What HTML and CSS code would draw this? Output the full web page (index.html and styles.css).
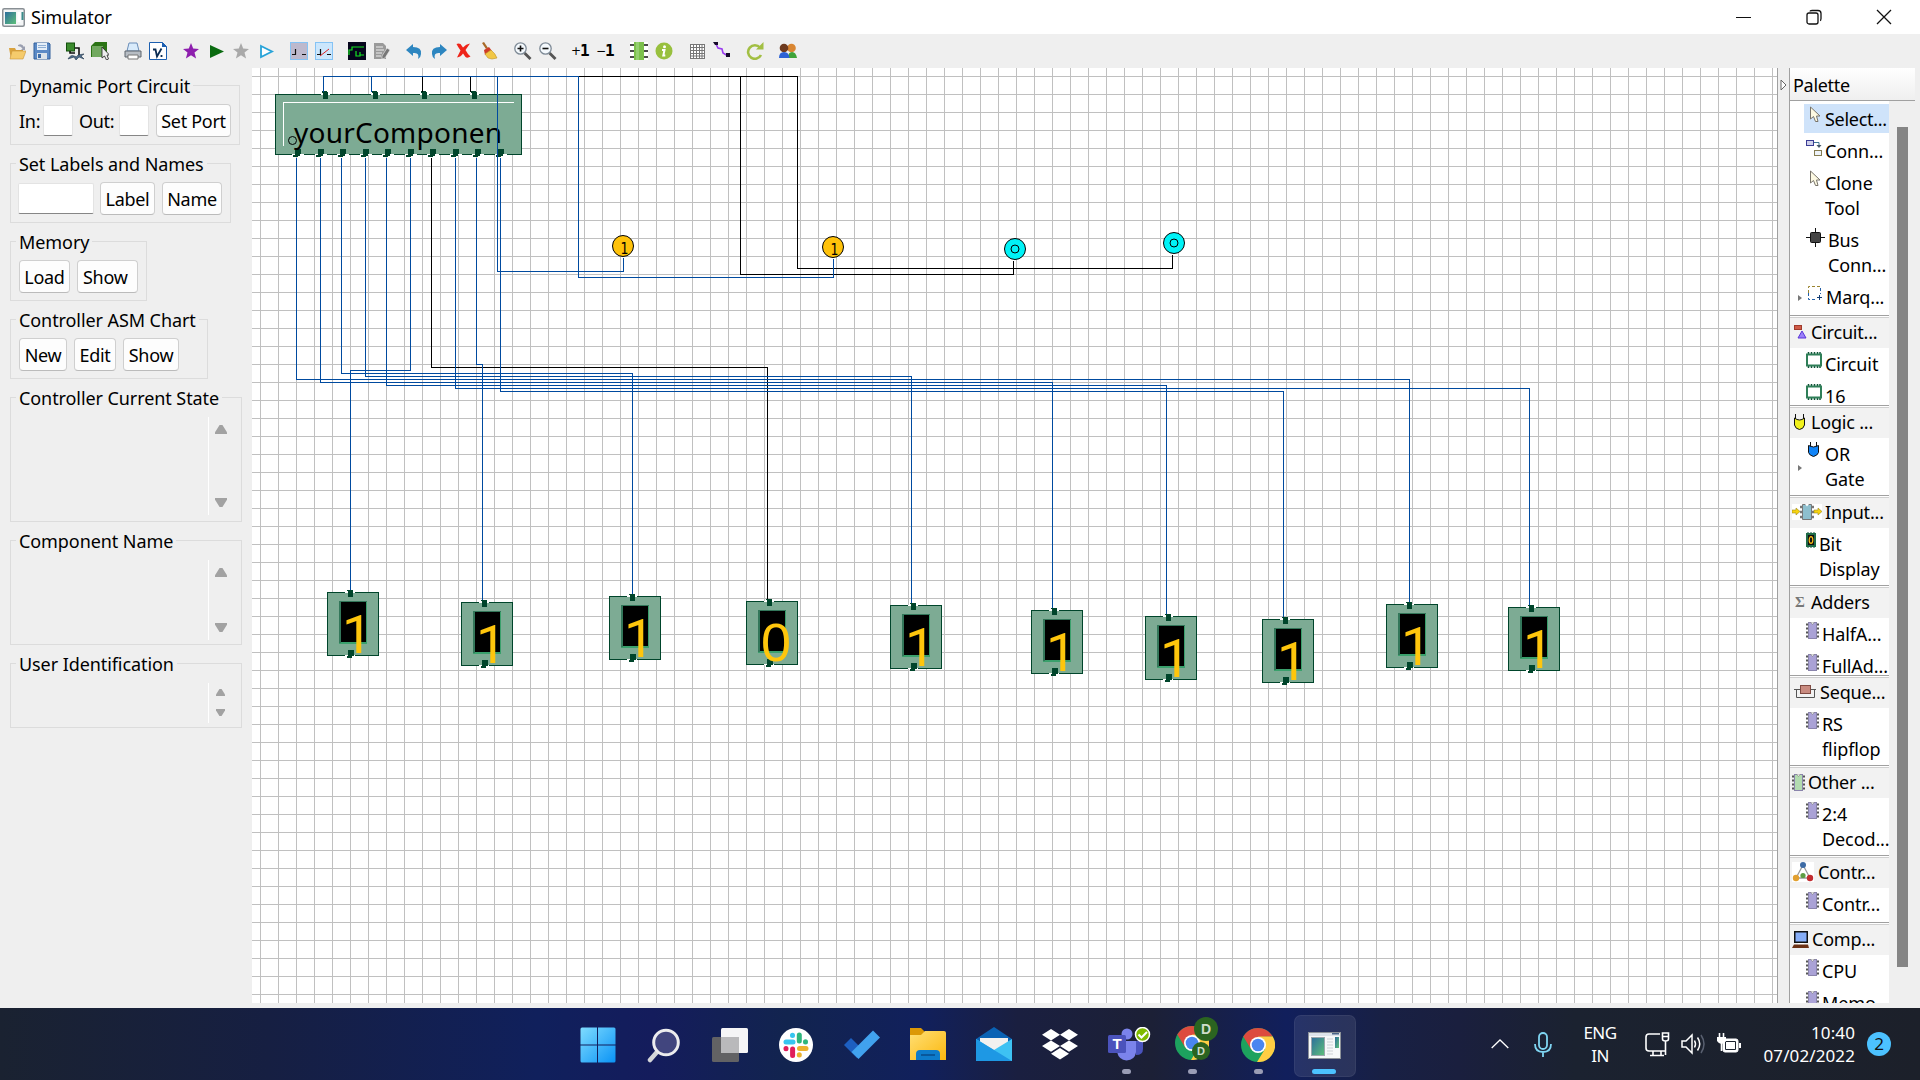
FILE: index.html
```html
<!DOCTYPE html>
<html lang="en">
<head>
<meta charset="utf-8">
<title>Simulator</title>
<link rel="stylesheet" href="styles.css">
</head>
<body>
<svg class="defs" aria-hidden="true">
  <defs>
    <linearGradient id="gWin" x1="0" y1="0" x2="1" y2="1"><stop offset="0" stop-color="#7fdcff"/><stop offset="1" stop-color="#0a93f5"/></linearGradient>
    <linearGradient id="gPic" x1="0" y1="0" x2="1" y2="1"><stop offset="0" stop-color="#2c6d9c"/><stop offset="1" stop-color="#5fc07a"/></linearGradient>
    <linearGradient id="gFold" x1="0" y1="0" x2="1" y2="1"><stop offset="0" stop-color="#ffdf75"/><stop offset="1" stop-color="#fbb80f"/></linearGradient>
    <symbol id="app" viewBox="0 0 33 27">
      <rect x=".5" y=".5" width="32" height="26" fill="#f6f8f9" stroke="#8d9299"/>
      <rect x="1" y="1" width="31" height="3" fill="#dde3ea"/>
      <rect x="24" y="1" width="7" height="1.500" fill="#4a6488"/>
      <rect x="3.500" y="5.500" width="13" height="18" fill="url(#gPic)" stroke="#9aa6ad"/>
      <path d="M19 7h6M19 10h6M19 13h6M19 16h6M19 19h6M19 22h6" stroke="#cdd1d6"/>
      <rect x="27" y="5" width="4" height="11" fill="url(#gPic)"/>
    </symbol>
    <symbol id="chip" viewBox="0 0 13 17">
      <path d="M0 2.500h13M0 6.500h13M0 10.500h13M0 14.500h13" stroke="#555" stroke-width="2"/>
      <rect x="2.500" y=".5" width="8" height="16" fill="currentColor" stroke="#8a84ac"/>
      <path d="M4.500 0h4l-2 2.500z" fill="#fff" stroke="#777" stroke-width=".6"/>
    </symbol>
    <symbol id="board" viewBox="0 0 16 16">
      <path d="M2.500 0v16M5.500 0v16M8.500 0v16M11.500 0v16M14 0v16" stroke="#0d5034" stroke-width="1.500"/>
      <rect x="1" y="2.500" width="14" height="11" fill="#fff" stroke="#2f7f58" stroke-width="2"/>
    </symbol>
    <symbol id="cursor" viewBox="0 0 12 17">
      <path d="M1.500 1v12l3-2.500 2 5h2.500l-1.500-5.500h3.500z" fill="#fdf9e2" stroke="#77736a"/>
    </symbol>
    <symbol id="star" viewBox="0 0 18 18">
      <path d="M9 1l2.200 5.600 5.800.3-4.500 3.700 1.600 6L9 13.200l-5.100 3.400 1.600-6L1 6.900l5.800-.3z" fill="currentColor"/>
    </symbol>
    <symbol id="bit" viewBox="0 0 55 68">
      <g shape-rendering="crispEdges">
        <rect x=".5" y="2.500" width="51" height="63" fill="#7dab94" stroke="#00452b"/>
        <rect x="18" y="2" width="10" height="1" fill="#fff"/><rect x="18" y="65" width="10" height="1" fill="#fff"/>
        <path d="M20 0h6v7h-5v-6h-1zM21 60h6v6h-2v2h-5v-2h1z" fill="#00452b"/>
        <rect x="12" y="11" width="28" height="43" fill="#3aa06c"/>
        <path d="M12 11h28v1h-26v41h-2z" fill="#33775a"/>
        <rect x="14" y="12" width="25" height="40" fill="#000"/>
      </g>
    </symbol>
    <symbol id="topport" viewBox="0 0 9 9"><path d="M0 3h9v1h-9z" fill="#fff"/><path d="M1 0h5v1h1v7h-5v-6h-1z" fill="#00452b"/></symbol>
    <symbol id="botport" viewBox="0 0 12 9"><path d="M0 5h12v1h-12z" fill="#fff"/><path d="M3 0h6v5h-1v2h-2v1h-5v-2h2z" fill="#00452b"/></symbol>
    <symbol id="chrome" viewBox="0 0 34 34">
      <circle cx="17" cy="17" r="17" fill="#1da25e"/>
      <path d="M2.300 8.500A17 17 0 0 1 31.700 8.500L17 9 10.500 22z" fill="#dd4b3e"/>
      <path d="M31.700 8.500A17 17 0 0 1 16 34l8-13-7-12.500z" fill="#ffce43"/>
      <circle cx="17" cy="17" r="8" fill="#fff"/><circle cx="17" cy="17" r="6.300" fill="#4a86f0"/>
    </symbol>
    <pattern id="grid" x="260" y="76" width="18" height="18" patternUnits="userSpaceOnUse">
      <path d="M0 0h18v1h-17v17h-1z" fill="#c0c0c0"/>
    </pattern>
  </defs>
</svg>

<header class="titlebar">
  <svg class="app-icon" width="23" height="19" viewBox="0 0 23 19"><rect x=".75" y=".75" width="21.500" height="17.500" rx="1.500" fill="#f3f5f6" stroke="#898f94" stroke-width="1.500"/><rect x="3" y="4" width="11" height="12" fill="url(#gPic)"/><rect x="15.500" y="4" width="3" height="10" fill="#fff"/><rect x="19.500" y="4" width="2" height="8" fill="#3b8b8a"/></svg>
  <h1 class="title">Simulator</h1>
  <div class="window-buttons">
    <svg width="16" height="16"><path d="M0 8.500h15" stroke="#111"/></svg>
    <svg width="16" height="16" fill="none" stroke="#111" stroke-width="1.300"><rect x="1" y="4" width="11" height="11" rx="2"/><path d="M4 2.500q0-1 2-1h6q3 0 3 3v5q0 2-1 2"/></svg>
    <svg width="16" height="16"><path d="M1 1l14 14M15 1L1 15" stroke="#111" stroke-width="1.300"/></svg>
  </div>
</header>

<nav class="toolbar">
  <div class="tools">
    <svg viewBox="0 0 18 18"><path d="M1 6h6l1 2h7v9H3z" fill="#d9a23c"/><path d="M10 3q4-2 6 2l1-1v4h-4l1.500-1.500Q13 4 10 4z" fill="#9a9fb0"/><path d="M4 9h14l-3 8H2z" fill="#f5cb6c" stroke="#c99435" stroke-width=".6"/></svg>
    <svg viewBox="0 0 18 18"><path d="M1 1h15l1 1v15H1z" fill="#5b8ac6" stroke="#33609c"/><rect x="4" y="1" width="10" height="7" fill="#e4eef8"/><path d="M5 3.500h8M5 5.500h8" stroke="#8eaed4"/><rect x="4" y="11" width="10" height="6" fill="#dbe3ea"/><rect x="5" y="12" width="3" height="4" fill="#3e6ca8"/></svg>
  </div>
  <div class="tools">
    <svg viewBox="0 0 18 18"><rect x=".5" y="1" width="8" height="8" fill="#3c8b2e" stroke="#13500d"/><path d="M4 9v2h5M9 6h4v8" fill="none" stroke="#111" stroke-width="1.600"/><path d="M2 17q3-5 6-3t4-1l6-1-3 2 3 3-5-2-3 3-2-3z" fill="#4c6b8a" stroke="#1e3449" stroke-width=".6"/></svg>
    <svg viewBox="0 0 18 18"><path d="M0 4l4-4h12v12l-3 3H0z" fill="#2c7415"/><rect x="1" y="4" width="11" height="11" fill="#72a960"/><path d="M11 5v11l2.500-2 2 4 2-1-1.500-4h2.500z" fill="#eee" stroke="#222" stroke-width=".8"/></svg>
  </div>
  <div class="tools">
    <svg viewBox="0 0 18 18"><path d="M5 1h8l2 8H3z" fill="#d9ebfb" stroke="#6a8db8"/><path d="M1 9h16v6H1z" fill="#b7bdc4" stroke="#5d646c"/><path d="M4 13h10v4H4z" fill="#fff" stroke="#777"/></svg>
    <svg viewBox="0 0 18 18"><path d="M.5.500h13l4 4v13H.5z" fill="#fff" stroke="#1c5fb0"/><path d="M13 0l5 5h-5z" fill="#1c5fb0"/><path d="M4 7.500h2.500l1.500 7 4.500-8M12.500 13v2" fill="none" stroke="#0b2c52" stroke-width="1.800"/></svg>
  </div>
  <div class="tools">
    <svg class="purple"><use href="#star"/></svg>
    <svg viewBox="0 0 18 18"><path d="M3 3l14 6.500-14 6.500z" fill="#0a6b10"/></svg>
    <svg class="grey"><use href="#star"/></svg>
    <svg viewBox="0 0 18 18"><path d="M4 4l11 5.500-11 5.500z" fill="#fff" stroke="#27a3d8" stroke-width="1.800"/></svg>
  </div>
  <div class="tools">
    <svg viewBox="0 0 18 18"><rect x=".5" y=".5" width="17" height="17" fill="#bdb9cd" stroke="#85c3f5"/><path d="M2 12.500h3.500V7M12 12.500h4" fill="none" stroke="#111" stroke-width="1.200"/></svg>
    <svg viewBox="0 0 18 18"><rect x=".5" y=".5" width="17" height="17" fill="#cbe6fc" stroke="#85c3f5"/><path d="M2 12.500h3.500V7M12 12.500h4" fill="none" stroke="#111" stroke-width="1.200"/><path d="M5 14l9-7" stroke="#e02222"/></svg>
  </div>
  <div class="tools">
    <svg viewBox="0 0 18 18"><rect width="18" height="18" fill="#05051c"/><path d="M1 13V8h3V5h12M8 9v5h4v-4M12 13h4" fill="none" stroke="#15e321" stroke-width="1.200"/></svg>
    <svg viewBox="0 0 18 18"><path d="M1 1h9l3 3v13H1z" fill="#9a9a9a"/><path d="M3 5h7M3 8h8M3 11h6M3 14h5" stroke="#eee"/><path d="M9 14l5-8 3 2-5 8-3 1z" fill="#777" stroke="#eee" stroke-width=".6"/></svg>
  </div>
  <div class="tools shift">
    <svg viewBox="0 0 18 18"><path d="M1 8l7-6v3q9 0 8 7 0 3-3 5 2-7-5-6v3z" fill="#2d86c0"/></svg>
    <svg viewBox="0 0 18 18"><path d="M17 8l-7-6v3q-9 0-8 7 0 3 3 5-2-7 5-6v3z" fill="#2d86c0"/></svg>
    <svg viewBox="0 0 18 18"><path d="M1.500 2q2-1 4 0L8 5.500Q11 2 15 1.500L10.500 8q2 4 5 6.500-3 2-5 .5L8 11.500Q6 15 2 15.500L5.500 8.500Q3 5 1.500 2z" fill="#ee2419"/></svg>
    <svg viewBox="0 0 18 18"><path d="M2 1l2-1 4 6-2 1z" fill="#a86a28"/><path d="M4 8l5-3 3 4-7 4z" fill="#cf3b28"/><path d="M5 12l6-4q4 3 6 8l-5 1-4-1z" fill="#f1c746" stroke="#bf9226" stroke-width=".6"/></svg>
  </div>
  <div class="tools">
    <svg viewBox="0 0 18 18"><path d="M10.500 11l6 6" stroke="#555" stroke-width="2.800"/><circle cx="6.500" cy="6.500" r="5.700" fill="#f4f9fd" stroke="#7e8a96" stroke-width="1.300"/><path d="M3.500 6.500h6M6.500 3.500v6" stroke="#111" stroke-width="1.600"/></svg>
    <svg viewBox="0 0 18 18"><path d="M10.500 11l6 6" stroke="#555" stroke-width="2.800"/><circle cx="6.500" cy="6.500" r="5.700" fill="#f4f9fd" stroke="#7e8a96" stroke-width="1.300"/><path d="M3.500 6.500h6" stroke="#111" stroke-width="1.600"/></svg>
  </div>
  <div class="tools shift">
    <span class="step">+<b>1</b></span>
    <span class="step">−<b>1</b></span>
  </div>
  <div class="tools">
    <svg viewBox="0 0 18 18"><rect width="18" height="18" fill="#fff"/><path d="M0 3h18M0 9h18M0 15h18" stroke="#111" stroke-width="1.500"/><rect x="4" width="10" height="18" fill="#7cc04c"/><rect x="6" width="3" height="18" fill="#95cf70"/></svg>
    <svg viewBox="0 0 18 18"><circle cx="9" cy="9" r="8.500" fill="#98c03e"/><circle cx="9.500" cy="4.800" r="1.500" fill="#fff"/><path d="M7 8h2.500l-1.200 5.500h2" fill="none" stroke="#fff" stroke-width="2"/></svg>
  </div>
  <div class="tools">
    <svg viewBox="0 0 18 18" fill="none" stroke="#777"><rect x="2.500" y="2.500" width="14" height="14" fill="#fff"/><path d="M5.500 2v15M8.500 2v15M11.500 2v15M14 2v15M2 5.500h15M2 8.500h15M2 11.500h15M2 14h15"/></svg>
    <svg viewBox="0 0 18 18"><path d="M3 2l2 4 4 1 1 4 5 3" fill="none" stroke="#9a3cf0" stroke-width="1.600"/><path d="M0 0h5v3H2zM13 11h4v4h-4z" fill="#160a2a"/></svg>
  </div>
  <div class="tools">
    <svg viewBox="0 0 18 18"><path d="M14 5.500A6.800 6.800 0 1 0 15 13" fill="none" stroke="#a2bf43" stroke-width="2.600"/><path d="M17.500 0v7.500H10z" fill="#a2bf43"/></svg>
  </div>
  <div class="tools">
    <svg viewBox="0 0 18 18"><circle cx="12.500" cy="6" r="4.300" fill="#d98632"/><path d="M9 16q0-6 4-6t5 6z" fill="#3fa33a"/><circle cx="5" cy="6" r="4.300" fill="#6e3a1e"/><path d="M0 16q0-6 5-6t5.500 6z" fill="#2d62d6"/></svg>
  </div>
</nav>

<main class="workspace">
  <aside class="sidebar">
    <section class="group w230">
      <h2>Dynamic Port Circuit</h2>
      <div class="row"><label>In:</label><i class="field in"></i><label class="out">Out:</label><i class="field in"></i><button class="b-port">Set Port</button></div>
    </section>
    <section class="group w221">
      <h2>Set Labels and Names</h2>
      <div class="row"><i class="field wide"></i><button class="b-label">Label</button><button class="b-name">Name</button></div>
    </section>
    <section class="group w137">
      <h2>Memory</h2>
      <div class="row"><button class="b-load">Load</button><button class="b-mshow">Show</button></div>
    </section>
    <section class="group w198">
      <h2>Controller ASM Chart</h2>
      <div class="row"><button class="b-new">New</button><button class="b-edit">Edit</button><button class="b-cshow">Show</button></div>
    </section>
    <section class="group w232 state">
      <h2>Controller Current State</h2>
      <div class="scroll"><i class="up"></i><i class="down"></i></div>
    </section>
    <section class="group w232 comp">
      <h2>Component Name</h2>
      <div class="scroll"><i class="up"></i><i class="down"></i></div>
    </section>
    <section class="group w232 user">
      <h2>User Identification</h2>
      <div class="scroll small"><i class="up"></i><i class="down"></i></div>
    </section>
  </aside>

  <svg class="canvas" width="1525" height="935" viewBox="252 68 1525 935">
    <rect x="252" y="68" width="1525" height="935" fill="#fff"/>
    <rect x="252" y="68" width="1525" height="935" fill="url(#grid)" shape-rendering="crispEdges"/>
    <g shape-rendering="crispEdges">
      <rect x="275.500" y="94.500" width="246" height="60" fill="#7dab94" stroke="#00452b"/>
      <path d="M283.500 146v-43.500h230" fill="none" stroke="#fff"/>
      <use href="#topport" x="321" y="91" width="9" height="9"/>
      <use href="#topport" x="371" y="91" width="9" height="9"/>
      <use href="#topport" x="420" y="91" width="9" height="9"/>
      <use href="#topport" x="470" y="91" width="9" height="9"/>
      <use href="#botport" x="292" y="149" width="12" height="9"/>
      <use href="#botport" x="315" y="149" width="12" height="9"/>
      <use href="#botport" x="337" y="149" width="12" height="9"/>
      <use href="#botport" x="360" y="149" width="12" height="9"/>
      <use href="#botport" x="382" y="149" width="12" height="9"/>
      <use href="#botport" x="405" y="149" width="12" height="9"/>
      <use href="#botport" x="427" y="149" width="12" height="9"/>
      <use href="#botport" x="450" y="149" width="12" height="9"/>
      <use href="#botport" x="472" y="149" width="12" height="9"/>
      <use href="#botport" x="495" y="149" width="12" height="9"/>
    </g>
    <circle cx="292.500" cy="140.500" r="4" fill="none" stroke="#000"/>
    <text class="comp-name" x="294" y="143" textLength="208">yourComponen</text>

    <g transform="translate(.5 .5)" fill="none" shape-rendering="crispEdges">
      <g stroke="#000">
        <path d="M422 91V76H797V268H1172V254"/>
        <path d="M470 91V76H740V274H1013V260"/>
        <path d="M431 157V367H767V600"/>
      </g>
      <g stroke="#004a9f">
        <path d="M323 91V76H497V271H623V257"/>
        <path d="M371 91V76H578V277H833V258"/>
        <path d="M296 157V379H1409V603"/>
        <path d="M320 157V382H1052V609"/>
        <path d="M341 157V373H632V595"/>
        <path d="M365 157V376H911V604"/>
        <path d="M386 157V385H1166V615"/>
        <path d="M410 157V370H350V591"/>
        <path d="M455 157V388H1529V606"/>
        <path d="M476 157V364H482V601"/>
        <path d="M500 157V391H1283V618"/>
      </g>
    </g>

    <g stroke="#000">
      <circle cx="623" cy="246" r="10.500" fill="#ffc20a"/><circle cx="833" cy="247" r="10.500" fill="#ffc20a"/>
      <circle cx="1015" cy="249" r="10.500" fill="#00f3f7"/><circle cx="1174" cy="243" r="10.500" fill="#00f3f7"/>
      <circle cx="1015" cy="249" r="4" fill="none"/><circle cx="1174" cy="243" r="4" fill="none"/>
    </g>
    <text class="pin" x="620.500" y="253.500" textLength="8" lengthAdjust="spacingAndGlyphs">1</text>
    <text class="pin" x="830.500" y="254.500" textLength="8" lengthAdjust="spacingAndGlyphs">1</text>

    <use href="#bit" x="327" y="590" width="55" height="68"/><text class="digit" x="342" y="653">1</text>
    <use href="#bit" x="461" y="600" width="55" height="68"/><text class="digit" x="476" y="663">1</text>
    <use href="#bit" x="609" y="594" width="55" height="68"/><text class="digit" x="624" y="657">1</text>
    <use href="#bit" x="746" y="599" width="55" height="68"/><text class="digit zero" x="761" y="661">0</text>
    <use href="#bit" x="890" y="603" width="55" height="68"/><text class="digit" x="905" y="666">1</text>
    <use href="#bit" x="1031" y="608" width="55" height="68"/><text class="digit" x="1046" y="671">1</text>
    <use href="#bit" x="1145" y="614" width="55" height="68"/><text class="digit" x="1160" y="677">1</text>
    <use href="#bit" x="1262" y="617" width="55" height="68"/><text class="digit" x="1277" y="680">1</text>
    <use href="#bit" x="1386" y="602" width="55" height="68"/><text class="digit" x="1401" y="665">1</text>
    <use href="#bit" x="1508" y="605" width="55" height="68"/><text class="digit" x="1523" y="668">1</text>
  </svg>

  <aside class="palette">
    <div class="flyout"><svg width="7" height="12"><path d="M1 1l5 5-5 5z" fill="#fff" stroke="#666"/></svg></div>
    <div class="palette-body">
      <h2 class="palette-title">Palette</h2>
      <div class="palette-scroll">
        <div class="list">
          <div class="toolset">
            <div class="item selected"><svg class="ic cur"><use href="#cursor"/></svg><p>Select...</p></div>
            <div class="item"><svg class="ic" width="16" height="17"><rect x=".5" y="1.500" width="7" height="5" fill="#cfd0ea" stroke="#3a3c94"/><path d="M8 3.500h5v4" fill="none" stroke="#3d7391"/><path d="M10.500 6h5L13 9z" fill="#456"/><rect x="8.500" y="11.500" width="7" height="5" fill="#eef3fa" stroke="#857c51"/></svg><p>Conn...</p></div>
            <div class="item"><svg class="ic cur"><use href="#cursor"/></svg><p>Clone<br>Tool</p></div>
            <div class="item"><svg class="ic" width="19" height="19"><path d="M0 9.500h19M9.500 0v19" stroke="#111"/><rect x="4.500" y="4.500" width="10" height="10" rx="1" fill="#444" stroke="#111"/></svg><p>Bus<br>Conn...</p></div>
            <div class="item has-more"><svg class="ic marq" width="16" height="16" fill="none"><path d="M2.500 8V1.500h12" stroke="#9a8430" stroke-dasharray="3 2"/><path d="M14.500 3v6M2.500 8v6.500h7" stroke="#2460a8" stroke-dasharray="3 2"/><path d="M11 12.500h5M13.500 10v5" stroke="#123c74"/></svg><p class="nudge">Marq...</p></div>
          </div>
          <section class="drawer">
            <h3><svg width="13" height="14"><rect x=".5" y=".5" width="7" height="4" fill="#cf5b47" stroke="#a03a2c"/><path d="M8 6l4 7H4z" fill="#9a80fa" stroke="#5a35d8"/></svg>Circuit...</h3>
            <div class="item"><svg class="ic" width="16" height="16"><use href="#board"/></svg><p>Circuit</p></div>
            <div class="item"><svg class="ic" width="16" height="16"><use href="#board"/></svg><p>16</p></div>
          </section>
          <section class="drawer">
            <h3><svg width="13" height="17"><path d="M1.500 0v5M9.500 0v5" stroke="#111"/><path d="M.5 4q5 4 10 0v7q-1 4-5 4.500-4-.5-5-4.500z" fill="#f2f21c" stroke="#111"/></svg>Logic ...</h3>
            <div class="item has-more"><svg class="ic" width="16" height="16"><path d="M4.500 0v5M10.500 0v5" stroke="#111"/><path d="M2.500 3.500q5 3 10 0v7q-1 3-5 4-4-1-5-4z" fill="#1184f7" stroke="#111"/></svg><p>OR<br>Gate</p></div>
          </section>
          <section class="drawer">
            <h3 class="tight"><svg class="io" width="30" height="16"><rect width="30" height="16" fill="#fff"/><path d="M8 3h14M8 8h14M8 13h14" stroke="#777" stroke-width="2.500"/><path d="M0 6h4V4l4 3.500L4 11V9H0zM22 6h4V4l4 3.500-4 3.500V9h-4z" fill="#f7d30e" stroke="#a08a20" stroke-width=".6"/><path d="M10.500.500h9v15h-9z" fill="#8dbfce" stroke="#777"/><path d="M13 0h4l-2 2.500z" fill="#fff"/></svg>Input...</h3>
            <div class="item"><svg class="ic" width="10" height="16"><path d="M2 0v16M5 0v16M8 0v16" stroke="#0d5034"/><rect y="1" width="10" height="14" fill="#1f6b48"/><rect x="2" y="3" width="6" height="10" fill="#111"/><ellipse cx="5" cy="8" rx="1.800" ry="3.300" fill="none" stroke="#f7b915" stroke-width="1.200"/></svg><p>Bit<br>Display</p></div>
          </section>
          <section class="drawer">
            <h3><span class="sigma">Σ</span>Adders</h3>
            <div class="item"><svg class="ic chip"><use href="#chip"/></svg><p>HalfA...</p></div>
            <div class="item"><svg class="ic chip"><use href="#chip"/></svg><p>FullAd...</p></div>
          </section>
          <section class="drawer">
            <h3><svg width="22" height="14"><path d="M0 4.500h22M2.500 5v7.500h18V5" fill="none" stroke="#555"/><rect x="6.500" y=".5" width="10" height="8" fill="#c98b80" stroke="#7f4a42"/></svg>Seque...</h3>
            <div class="item"><svg class="ic chip"><use href="#chip"/></svg><p>RS<br>flipflop</p></div>
          </section>
          <section class="drawer">
            <h3 class="tight"><svg class="chip green"><use href="#chip"/></svg>Other ...</h3>
            <div class="item"><svg class="ic chip"><use href="#chip"/></svg><p>2:4<br>Decod...</p></div>
          </section>
          <section class="drawer short">
            <h3><svg class="ctl" width="22" height="20"><rect width="22" height="20" fill="#fff"/><path d="M11 3L4 16h14z" fill="none" stroke="#999" stroke-width="1.300"/><circle cx="11" cy="3" r="3" fill="#3d6ba5"/><circle cx="4" cy="16" r="3.200" fill="#e2a030"/><circle cx="18" cy="16" r="3.200" fill="#c22c30"/><circle cx="11" cy="13.500" r="2.600" fill="#5d9c44"/></svg>Contr...</h3>
            <div class="item"><svg class="ic chip"><use href="#chip"/></svg><p>Contr...</p></div>
          </section>
          <section class="drawer last">
            <h3 class="tight"><svg class="pc" width="17" height="17"><rect x="2" y="0" width="14" height="12" fill="#111"/><rect x="3.500" y="1.500" width="11" height="9" fill="#86adf7"/><path d="M6 12h6v2H6z" fill="#fff"/><path d="M2 13.500h14l1 3.500H0z" fill="#6d3215"/></svg>Comp...</h3>
            <div class="item"><svg class="ic chip"><use href="#chip"/></svg><p>CPU</p></div>
            <div class="item"><svg class="ic chip"><use href="#chip"/></svg><p>Memo</p></div>
          </section>
        </div>
        <div class="scrollbar"><i></i></div>
      </div>
    </div>
  </aside>
</main>

<footer class="taskbar">
  <div class="apps">
    <div class="app"><svg width="36" height="36"><path d="M.5 2q0-1.500 1.500-1.500h15v17H.5zM18 .5h16q1.500 0 1.500 1.500v15.500H18zM.5 18.500H17v17H2q-1.500 0-1.500-1.500zM18 18.500h17.500V34q0 1.500-1.500 1.500H18z" fill="url(#gWin)"/></svg></div>
    <div class="app"><svg width="34" height="36"><path d="M10 25l-7 8" stroke="#d4d6d9" stroke-width="4.500" stroke-linecap="round"/><circle cx="19" cy="15.500" r="12.300" fill="#41457e" stroke="#ececee" stroke-width="3"/></svg></div>
    <div class="app"><svg width="36" height="36"><rect x="9" y="1" width="27" height="25" rx="1.500" fill="#f5f5f6"/><rect x="0" y="10" width="27" height="25" rx="1.500" fill="#626264"/><path d="M9 10h18v16H9z" fill="#b9b9bb"/></svg></div>
    <div class="app"><svg width="36" height="36"><circle cx="18" cy="18" r="17" fill="#fff"/><g stroke-width="5" stroke-linecap="round"><path d="M8 15h7M14.500 8.200v.3" stroke="#36c5f0"/><path d="M21.300 8v6M27.500 14.800v.2" stroke="#2eb67d"/><path d="M21.500 21.500h6.500M21.300 27.800v.2" stroke="#ecb22e"/><path d="M14.600 22v6.500M8 21.500v.2" stroke="#e01e5a"/></g></svg></div>
    <div class="app"><svg width="36" height="36"><path d="M0 18l7-7 13 13-7 7z" fill="#1d5fc0"/><path d="M7.500 25L29 3.500l7 7L14.500 32z" fill="#41a2ee"/></svg></div>
    <div class="app"><svg width="36" height="36"><path d="M0 1h11l4 4v8H0z" fill="#dc9806"/><path d="M0 8h11l4-4h19q2 0 2 2v27H0z" fill="url(#gFold)"/><path d="M6 33v-6q0-4 4-4h16q4 0 4 4v6z" fill="#0d7bcb"/><path d="M11 28h14" stroke="#0a4f8e" stroke-width="1.600"/></svg></div>
    <div class="app"><svg width="36" height="36"><path d="M0 12L18 0l18 12v10H0z" fill="#0a62b4"/><path d="M4 11h28v12H4z" fill="#f3f1ef"/><path d="M0 12l18 11L36 12v22H0z" fill="#3ec2f3"/><path d="M0 12l36 22H0z" fill="#1e98e4"/></svg></div>
    <div class="app"><svg width="36" height="34" fill="#fff"><path d="M9 1l9 5.700L9 12.400 0 6.700zM27 1l9 5.700-9 5.700-9-5.700zM9 12.400l9 5.700-9 5.700-9-5.700zM27 12.400l9 5.700-9 5.700-9-5.700zM18 20l9 5.700-9 5.700-9-5.700z"/></svg></div>
    <div class="app dot"><svg class="teams" width="43" height="36"><circle cx="19" cy="7" r="5.500" fill="#7b83eb"/><path d="M24 14h11v8q0 6-7 6z" fill="#4a53bd"/><path d="M9 14h19v11q-1 8-9.500 8.500Q11 33 9 25z" fill="#7b83eb"/><rect x="0" y="8" width="18" height="18" rx="1.500" fill="#4b53bc"/><text class="glyph" x="4.500" y="22">T</text><circle cx="34.500" cy="7.500" r="7" fill="#7fba00" stroke="#fff" stroke-width="1.500"/><path d="M30.500 7.500l3 3 5.500-5.500" fill="none" stroke="#fff" stroke-width="2"/></svg></div>
    <div class="app dot"><svg class="wide-ic" width="44" height="44"><use href="#chrome" x="1" y="9" width="34" height="34"/><circle cx="32" cy="12" r="12" fill="#2b6420"/><text class="badge-d" x="27" y="17">D</text><circle cx="27" cy="34" r="9" fill="#2b6420"/><text class="badge-d sm" x="23" y="38">D</text></svg></div>
    <div class="app dot"><svg width="34" height="34"><use href="#chrome"/></svg></div>
    <div class="app active"><svg width="33" height="27"><use href="#app"/></svg></div>
  </div>
  <div class="tray">
    <svg class="chev" width="18" height="10"><path d="M.7 9L9 1l8.300 8" fill="none" stroke="#fff" stroke-width="1.300"/></svg>
    <svg class="mic" width="18" height="25" fill="none" stroke="#7fd5f2" stroke-width="1.800"><rect x="5" y="1" width="8" height="16" rx="4"/><path d="M1 12q0 8 8 8t8-8M9 20v5"/></svg>
    <p class="lang">ENG<br>IN</p>
    <svg class="net" width="25" height="25" fill="none" stroke="#fff" stroke-width="1.600"><path d="M15 2H4Q1 2 1 5v11q0 3 3 3h16M8 19v4M16 19v4M5 23.500h14"/><path d="M17.500 1h6v6q0 2-3 2t-3-2zM20.500 9v14M17 4.500h7"/></svg>
    <svg class="vol" width="25" height="22" fill="none" stroke="#fff" stroke-width="1.500"><path d="M1 8v6h4l6 6V2L5 8zM13.500 7.500q2 3.500 0 7M16.500 4.500q4.500 6.500 0 13"/><path d="M20 2q6 9 0 18" stroke="#596070"/></svg>
    <svg class="bat" width="25" height="22"><rect x="6" y="6" width="15" height="13" rx="2" fill="#fff" stroke="#fff"/><path d="M8.500 8.500h10v8h-10z" fill="none" stroke="#1b222e" stroke-width="1"/><path d="M22 10h2v5h-2z" fill="#fff"/><path d="M2.500 0v5M6.500 0v5M4.500 9v9" stroke="#fff" stroke-width="1.600"/><path d="M0 4h9v4q-2 3-4.500 3T0 8z" fill="#fff"/></svg>
    <p class="clock">10:40<br>07/02/2022</p>
    <span class="count">2</span>
  </div>
</footer>
</body>
</html>
```
FILE: styles.css
```css
* { box-sizing: border-box; margin: 0; padding: 0; }
body {
  width: 1920px; height: 1080px; overflow: hidden;
  display: flex; flex-direction: column;
  font: 18px/25px "Noto Sans", "Open Sans", sans-serif;
  letter-spacing: -0.3px;
  color: #000; background: #efefef;
}
h1, h2, h3 { font-size: inherit; font-weight: 400; }
svg { display: block; flex: none; }
.defs { position: absolute; width: 0; height: 0; }

.titlebar { height: 34px; background: #fff; display: flex; align-items: center; padding-left: 2px; }
.title { margin-left: 6px; letter-spacing: -0.15px; }
.window-buttons { margin-left: auto; display: flex; gap: 54px; padding-right: 28px; }

.toolbar { height: 34px; display: flex; align-items: center; gap: 15px; padding-left: 8px; }
.tools { display: flex; gap: 7px; }
.tools.shift { margin: 0 1px 0 -1px; }
.tools svg { width: 18px; height: 18px; }
.purple { color: #8e1fae; }
.grey { color: #a9a9a9; }
.step { width: 18px; display: flex; align-items: center; font: 12px/18px "DejaVu Sans", sans-serif; letter-spacing: -1px; }
.step b { font: 700 16px/18px "DejaVu Sans Mono", monospace; }

.workspace { height: 940px; display: flex; align-items: flex-start; }

.sidebar { width: 252px; padding: 17px 0 0 10px; display: flex; flex-direction: column; gap: 18px; }
.group { height: 60px; border: 1px solid #dcdcdc; }
.group h2 { width: max-content; margin: -12px 0 0 5px; padding: 0 3px; background: #efefef; white-space: nowrap; letter-spacing: -0.08px; }
.row { display: flex; align-items: center; height: 33px; margin-top: 5px; padding-left: 8px; }
.w230 { width: 230px; } .w221 { width: 221px; } .w137 { width: 137px; } .w198 { width: 198px; } .w232 { width: 232px; }
.state { height: 125px; } .comp { height: 105px; } .user { height: 65px; }
.row label { width: 24px; white-space: nowrap; padding-top: 1px; }
.row .out { margin-left: 6px; width: 40px; }
.field { height: 31px; background: #fff; border: 1px solid #e3e3e3; border-bottom-color: #868686; border-radius: 2px; }
.field.in { width: 30px; }
.field.wide { width: 76px; margin-right: 6px; margin-left: -1px; }
.row button { height: 33px; padding: 1px 0 0; font: inherit; letter-spacing: inherit; color: #000; background: #fdfdfd; border: 1px solid #cfcfcf; border-bottom-color: #bbb; border-radius: 4px; white-space: nowrap; }
.b-port { width: 75px; margin-left: 7px; }
.b-label { width: 55px; margin-right: 7px; }
.b-name { width: 60px; }
.b-load { width: 51px; margin-right: 7px; }
.row .b-mshow { width: 61px; text-align: left; padding-left: 5px; }
.b-new { width: 48px; margin-right: 7px; }
.b-edit { width: 42px; margin-right: 7px; }
.b-cshow { width: 56px; }
.scroll { margin: 6px 0 0 197px; height: 98px; width: 25px; border-left: 1px solid #fff; display: flex; flex-direction: column; justify-content: space-between; align-items: center; padding: 8px 0 8px; }
.comp .scroll { height: 80px; }
.scroll.small { height: 40px; padding: 6px 1px 7px 0; }
.up, .down { width: 12px; height: 9px; background: #a2a2a2; clip-path: polygon(38% 0, 62% 0, 100% 80%, 100% 100%, 0 100%, 0 80%); }
.down { transform: rotate(180deg); }
.small i { width: 9px; height: 7px; }

.comp-name { font-size: 28px; letter-spacing: 0; }
.digit { font: 54px Roboto, sans-serif; letter-spacing: 0; fill: #ffc60c; }
.zero { font-family: "Liberation Sans", Arial, sans-serif; }
.pin { font: 16px "DejaVu Sans", sans-serif; letter-spacing: 0; }

.palette { width: 138px; height: 935px; display: flex; border-left: 1px solid #a0a0a0; }
.flyout { width: 12px; border-right: 1px solid #a0a0a0; padding: 11px 0 0 2px; }
.palette-body { width: 125px; }
.palette-title { height: 33px; padding: 5px 0 0 3px; background: linear-gradient(#fff, #efefef); border-bottom: 1px solid #a0a0a0; }
.palette-scroll { display: flex; height: 902px; }
.list { width: 99px; height: 902px; overflow: hidden; background: #fff; }
.toolset { height: 214px; padding-top: 3px; }
.item { display: flex; height: 32px; padding: 2.500px 0 0 16px; gap: 3px; position: relative; white-space: nowrap; letter-spacing: -0.1px; }
.item:has(br) { height: 57px; }
.selected { letter-spacing: -0.3px; background: linear-gradient(#cfe3fa, #cfe3fa) 14px 0 / 85px 29px no-repeat; }
.ic.cur { width: 12px; height: 17px; margin: -1px 0 0 3px; }
.item .ic.cur + p { margin-left: 1px; }
.nudge { margin-left: 1px; }
.chip { width: 13px; height: 17px; color: #aaa2d6; }
.green { color: #b2dcb0; }
.has-more::before { content: ""; position: absolute; left: 8px; top: 50%; margin-top: -3px; border-left: 4px solid #777; border-top: 3px solid transparent; border-bottom: 3px solid transparent; }
.drawer { height: 90px; overflow: hidden; border-top: 1px solid #a0a0a0; }
.drawer.short { height: 67px; }
.drawer.last { height: 90px; }
.drawer h3 { height: 31px; margin: 1px 0 1px; border-top: 1px solid #d0d0d0; background: #f2f2f2; display: flex; align-items: center; gap: 4px; padding: 0 0 2px 4px; white-space: nowrap; letter-spacing: -0.2px; }
.drawer h3.tight { gap: 3px; }
.drawer h3 .io, .drawer h3 .chip, .drawer h3 .pc, .drawer h3 .ctl { margin-left: -2px; }
.sigma { width: 13px; padding-left: 1px; font: 700 15px/20px "Liberation Serif", serif; color: #777; }
.scrollbar { margin-left: 8px; padding-top: 26px; }
.scrollbar i { display: block; width: 11px; height: 840px; background: #858585; }

.taskbar { height: 72px; display: flex; justify-content: space-between; color: #fff;
  background: linear-gradient(90deg, #1a2231 0, #161f42 14%, #10205c 28%, #141c5c 34%, #12244f 41%, #11205c 48%, #1a1f40 53%, #1c2036 60%, #111f5c 67%, #182044 72%, #1a1f3e 76%, #1b2230 82%, #1c202a 100%); }
.apps { display: flex; padding-left: 565px; }
.app { width: 66px; height: 72px; display: flex; align-items: center; justify-content: center; position: relative; padding-top: 2px; }
.wide-ic { margin: -12px 0 0 8px; }
.teams { margin-left: 6px; }
.dot::after, .active::after { content: ""; position: absolute; left: 50%; bottom: 6px; width: 9px; height: 5px; margin-left: -4px; border-radius: 3px; background: #9a9db5; }
.active::before { content: ""; position: absolute; left: 3px; top: 7px; width: 60px; height: 60px; border-radius: 7px; background: rgba(255, 255, 255, .09); border: 1px solid rgba(255, 255, 255, .06); }
.active svg { position: relative; }
.active::after { width: 24px; margin-left: -12px; background: #4cc2ff; }
.glyph { font: 700 15px "Liberation Sans", sans-serif; fill: #fff; }
.badge-d { font: 700 14px "Liberation Sans", sans-serif; fill: #cfdccb; }
.badge-d.sm { font-size: 11px; }
.tray { display: flex; align-items: center; padding-right: 29px; font-size: 17px; line-height: 23px; letter-spacing: -0.2px; }
.mic { margin-left: 25px; }
.lang { width: 44px; margin-left: 26px; text-align: center; letter-spacing: -0.5px; }
.net { margin-left: 23px; }
.vol { margin-left: 11px; }
.bat { margin-left: 11px; }
.clock { width: 96px; margin-left: 17px; text-align: right; white-space: nowrap; letter-spacing: 0.1px; }
.count { width: 24px; height: 24px; margin-left: 12px; border-radius: 50%; background: #4cc2ff; color: #111; text-align: center; font-size: 17px; line-height: 24px; }
```
